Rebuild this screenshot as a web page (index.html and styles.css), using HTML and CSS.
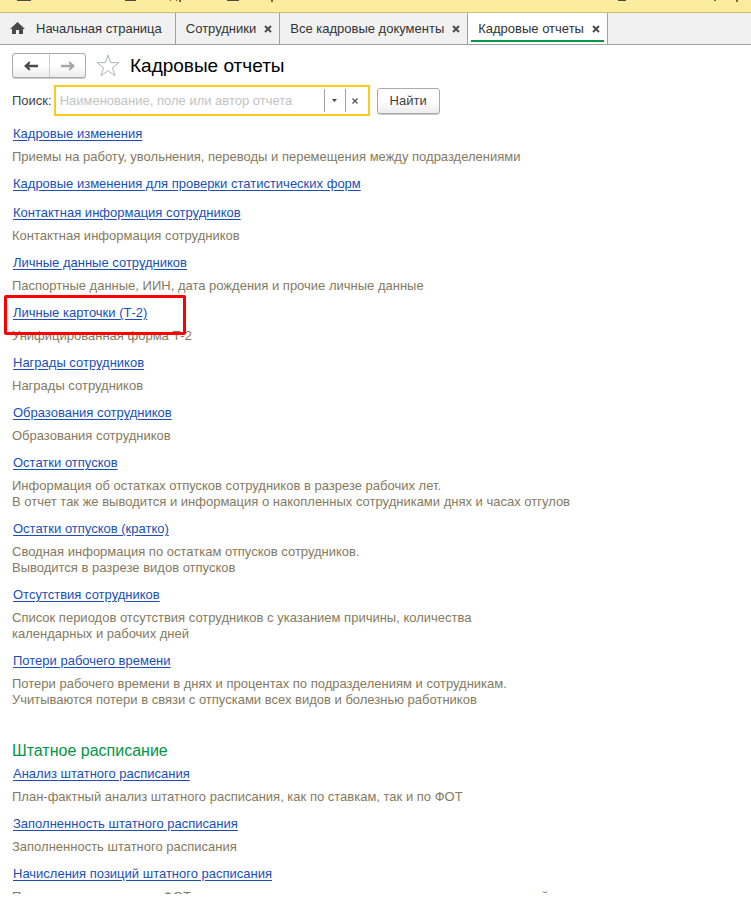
FILE: index.html
```
<!DOCTYPE html>
<html lang="ru">
<head>
    <meta charset="UTF-8">
    <meta name="viewport" content="width=device-width, initial-scale=1.0">
    <title>Кадровые отчеты</title>
    <link rel="stylesheet" href="styles.css">
</head>
<body>
    <div class="sections">
        <svg width="751" height="2" viewBox="0 0 751 2" aria-hidden="true">
            <path d="M17 0h14v1H17zM125 0h11v1h-11zM227 0h12v1h-12zM618 0h8v1h-8z" fill="#4a4a4a"/>
            <path d="M170 0h1v1h-1zM176 0h1v1h-1zM179 0h2v2h-2zM271 0h2v2h-2zM714 0h2v1h-2zM736 0h2v2h-2z" fill="#8a5a3a"/>
        </svg>
    </div>

    <nav class="tabs">
        <div class="tab tab-home">
            <svg width="15" height="13" viewBox="0 0 15 13" aria-hidden="true">
                <path d="M7.500 0L15 7h-2v5H9V8H6v4H2V7H0z" fill="#4a4a4a"/>
            </svg>
            <a href="#">Начальная страница</a>
        </div>
        <div class="tab">
            <a href="#">Сотрудники</a>
            <button class="tab-close" type="button" aria-label="Закрыть">
                <svg width="8" height="8" viewBox="0 0 8 8"><path d="M1 1l6 6M7 1L1 7"/></svg>
            </button>
        </div>
        <div class="tab">
            <a href="#">Все кадровые документы</a>
            <button class="tab-close" type="button" aria-label="Закрыть">
                <svg width="8" height="8" viewBox="0 0 8 8"><path d="M1 1l6 6M7 1L1 7"/></svg>
            </button>
        </div>
        <div class="tab active">
            <a href="#">Кадровые отчеты</a>
            <button class="tab-close" type="button" aria-label="Закрыть">
                <svg width="8" height="8" viewBox="0 0 8 8"><path d="M1 1l6 6M7 1L1 7"/></svg>
            </button>
        </div>
    </nav>

    <main class="page">
        <header class="title-bar">
            <div class="history">
                <button type="button" aria-label="Назад">
                    <svg width="14" height="10" viewBox="0 0 14 10"><path d="M0 5l5-4.500 1.500.5L5 3.800h9v2.400H5L6.500 9 5 9.500z" fill="#4a4a4a"/></svg>
                </button>
                <button type="button" aria-label="Вперед">
                    <svg width="14" height="10" viewBox="0 0 14 10"><path d="M14 5L9 .5 7.500 1 9 3.800H0v2.400h9L7.500 9l1.500.5z" fill="#a6a6a6"/></svg>
                </button>
            </div>
            <button class="favorite" type="button" aria-label="Добавить в избранное">
                <svg width="24" height="23" viewBox="0 0 24 23"><path d="M12 1l2.700 7.700h8.300l-6.500 5 2.500 8-7-4.900-7 4.900 2.500-8-6.500-5h8.300z" fill="#fff" stroke="#b0b4b8"/></svg>
            </button>
            <h1>Кадровые отчеты</h1>
        </header>

        <form class="search">
            <label for="query">Поиск:</label>
            <div class="search-box">
                <input type="text" id="query" name="query" placeholder="Наименование, поле или автор отчета">
                <button type="button" aria-label="Показать список">
                    <svg width="5" height="3" viewBox="0 0 5 3"><path d="M0 0h5L2.500 3z" fill="#404040"/></svg>
                </button>
                <button type="button" aria-label="Очистить">
                    <svg width="6" height="6" viewBox="0 0 6 6"><path d="M.5.5l5 5M5.500.5l-5 5" stroke="#555" stroke-width="1.300"/></svg>
                </button>
            </div>
            <button class="find" type="submit">Найти</button>
        </form>

        <section class="reports">
            <article class="report">
                <a href="#">Кадровые изменения</a>
                <p>Приемы на работу, увольнения, переводы и перемещения между подразделениями</p>
            </article>
            <article class="report no-text">
                <a href="#">Кадровые изменения для проверки статистических форм</a>
            </article>
            <article class="report">
                <a href="#">Контактная информация сотрудников</a>
                <p>Контактная информация сотрудников</p>
            </article>
            <article class="report">
                <a href="#">Личные данные сотрудников</a>
                <p>Паспортные данные, ИИН, дата рождения и прочие личные данные</p>
            </article>
            <article class="report marked">
                <a href="#">Личные карточки (Т-2)</a>
                <p>Унифицированная форма Т-2</p>
            </article>
            <article class="report">
                <a href="#">Награды сотрудников</a>
                <p>Награды сотрудников</p>
            </article>
            <article class="report">
                <a href="#">Образования сотрудников</a>
                <p>Образования сотрудников</p>
            </article>
            <article class="report">
                <a href="#">Остатки отпусков</a>
                <p>Информация об остатках отпусков сотрудников в разрезе рабочих лет.<br>В отчет так же выводится и информация о накопленных сотрудниками днях и часах отгулов</p>
            </article>
            <article class="report">
                <a href="#">Остатки отпусков (кратко)</a>
                <p>Сводная информация по остаткам отпусков сотрудников.<br>Выводится в разрезе видов отпусков</p>
            </article>
            <article class="report">
                <a href="#">Отсутствия сотрудников</a>
                <p>Список периодов отсутствия сотрудников с указанием причины, количества<br>календарных и рабочих дней</p>
            </article>
            <article class="report">
                <a href="#">Потери рабочего времени</a>
                <p>Потери рабочего времени в днях и процентах по подразделениям и сотрудникам.<br>Учитываются потери в связи с отпусками всех видов и болезнью работников</p>
            </article>
        </section>

        <section class="reports">
            <h2>Штатное расписание</h2>
            <article class="report">
                <a href="#">Анализ штатного расписания</a>
                <p>План-фактный анализ штатного расписания, как по ставкам, так и по ФОТ</p>
            </article>
            <article class="report">
                <a href="#">Заполненность штатного расписания</a>
                <p>Заполненность штатного расписания</p>
            </article>
            <article class="report cut">
                <a href="#">Начисления позиций штатного расписания</a>
                <p>Плановые начисления и ФОТ по позициям штатного расписания с учетом всех вакансий</p>
            </article>
        </section>
    </main>
</body>
</html>
```
FILE: styles.css
```
* {
    margin: 0;
    padding: 0;
    box-sizing: border-box;
}

body {
    font-family: "Liberation Sans", Arial, sans-serif;
    font-size: 13px;
    line-height: 16px;
    color: #404040;
    background: #fff;
}

button {
    font: inherit;
    color: inherit;
    background: none;
    border: none;
    cursor: pointer;
}

svg {
    display: block;
}

.sections {
    height: 13px;
    background: #fbec9e;
    border-bottom: 1px solid #c9bd7e;
    overflow: hidden;
}

.tabs {
    display: flex;
    height: 32px;
    background: #f1f1f1;
    border-bottom: 1px solid #a0a0a0;
}

.tab {
    display: flex;
    align-items: center;
    gap: 8px;
    padding: 0 7px 0 10px;
    border-right: 1px solid #a0a0a0;
}

.tab a {
    color: #333;
    text-decoration: none;
    white-space: nowrap;
}

.tab-home {
    gap: 11px;
    padding-right: 13px;
}

.tab-close path {
    stroke: #4d4d4d;
    stroke-width: 2;
}

.tab.active {
    position: relative;
    background: #fff;
}

.tab.active::after {
    content: '';
    position: absolute;
    left: 3px;
    right: 3px;
    bottom: 2px;
    height: 2px;
    background: #009646;
}

.page {
    padding: 8px 12px 0;
}

.title-bar {
    display: flex;
    align-items: center;
    height: 25px;
}

.history {
    display: flex;
    height: 25px;
    border: 1px solid #aaa;
    border-radius: 3px;
    background: linear-gradient(#fff 50%, #ececec);
    box-shadow: 0 1px 0 #ccc;
}

.history button {
    display: flex;
    align-items: center;
    justify-content: center;
    width: 36px;
}

.history button + button {
    border-left: 1px solid #d0d0d0;
}

.favorite {
    margin: 0 10px;
}

h1 {
    font-size: 19px;
    font-weight: normal;
    line-height: 24px;
    color: #000;
}

.search {
    display: flex;
    align-items: center;
    margin-top: 7px;
}

.search label {
    margin-right: 2px;
}

.search-box {
    display: flex;
    width: 316px;
    height: 31px;
    padding: 2px 0;
    border: 2px solid #fcca1e;
}

.search-box input {
    flex: 1;
    min-width: 0;
    padding: 0 4px;
    font: inherit;
    color: #404040;
    border: none;
    outline: none;
}

.search-box input::placeholder {
    color: #c3c3c3;
}

.search-box button {
    display: flex;
    align-items: center;
    justify-content: center;
    width: 21px;
    border-left: 1px solid #a0a0a0;
}

.search-box button:last-child {
    width: 23px;
    padding-right: 4px;
}

.find {
    width: 63px;
    height: 26px;
    margin-left: 7px;
    border: 1px solid #aaa;
    border-radius: 3px;
    background: linear-gradient(#fff 50%, #ececec);
    box-shadow: 0 1px 0 #ccc;
}

.reports {
    margin-top: 10px;
}

.reports + .reports {
    margin-top: 35px;
}

h2 {
    font-size: 16px;
    font-weight: normal;
    line-height: 16px;
    margin-bottom: 7px;
    color: #009646;
}

.report {
    margin-bottom: 11px;
}

.report.no-text {
    margin-bottom: 13px;
}

.report a {
    display: block;
    width: fit-content;
    margin-left: 1px;
    color: #1a4fb4;
    text-underline-offset: 2px;
}

.report p {
    padding-top: 7px;
    color: #857a5e;
}

.marked {
    position: relative;
}

.marked::after {
    content: '';
    position: absolute;
    top: -10px;
    left: -8px;
    width: 182px;
    height: 40px;
    border: 3px solid #f00;
    border-radius: 2px;
    box-sizing: border-box;
    pointer-events: none;
}

/* last row is clipped by the bottom of the list */
.cut {
    height: 28px;
    margin-bottom: 0;
    overflow: hidden;
}
```
